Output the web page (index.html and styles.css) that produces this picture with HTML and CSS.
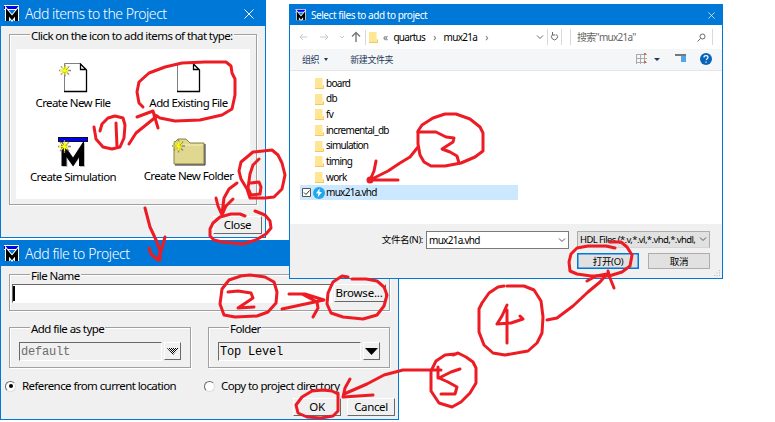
FILE: index.html
```html
<!DOCTYPE html>
<html lang="zh-CN">
<head>
<meta charset="utf-8">
<title>Add items to the Project</title>
<link rel="stylesheet" href="styles.css">
</head>
<body>
<svg class="defs" width="0" height="0">
  <symbol id="logo" viewBox="0 0 16 17">
    <path d="M0 0H15V5H0Z" fill="#fff"/><path d="M0 1H15V4H0Z" fill="#0000f0"/>
    <path d="M3.5 16V7.5L8 13L12.5 7.5V16" fill="none" stroke="#fff" stroke-width="5"/>
    <path d="M3.5 16V7.5L8 13L12.5 7.5V16" fill="none" stroke="#000" stroke-width="3"/>
  </symbol>
  <symbol id="star" viewBox="0 0 13 13">
    <path d="M6.5 0V13M0 6.5H13M2 2L11 11M11 2L2 11" stroke="#8c8c6a" stroke-width="1.4"/>
    <path d="M6.5 2V11M1 6.5H10M3 3L9 9M10 2L3 10" stroke="#ff0" stroke-width="1.1"/>
  </symbol>
  <symbol id="page" viewBox="0 0 24 30">
    <path d="M.5 28.5V.5H16L22.500 7V28.500Z" fill="#fff" stroke="#808080"/>
    <path d="M0 28.500H22.500V7L16.500 1V6.500H22.500" fill="none" stroke="#000" stroke-width="1.300"/>
  </symbol>
  <symbol id="folder" viewBox="0 0 9 11">
    <path d="M0 0H7.500V7.500H9V11H0Z" fill="#ffe694"/><path d="M0 10.500H8.500V7.500" fill="none" stroke="#eec95e"/>
  </symbol>
</svg>

<section class="window items">
  <header class="title"><svg class="logo"><use href="#logo"/></svg><span>Add items to the Project</span>
    <svg class="close" viewBox="0 0 10 10"><path d="M.5 .5L9.500 9.500M9.500 .5L.5 9.500"/></svg></header>
  <div class="group type-group">
    <span class="legend">Click on the icon to add items of that type:</span>
    <div class="choices">
      <div class="choice"><svg width="29" height="30"><use href="#page" x="5" width="24" height="30"/><use href="#star" x="0" y="1" width="12" height="13"/></svg><span>Create New File</span></div>
      <div class="choice"><svg width="24" height="30"><use href="#page" width="24" height="30"/></svg><span>Add Existing File</span></div>
      <div class="choice"><svg width="31" height="30"><path d="M0 0H30V5H0Z" fill="#111"/><path d="M1 1H29V4H1Z" fill="#00f"/><path d="M7 30V13L15.500 25L24.500 13V30" fill="none" stroke="#bbb" stroke-width="5"/><path d="M6 29V12L15 25L23.500 12V29" fill="none" stroke="#000" stroke-width="5"/><use href="#star" x="0" y="3" width="13" height="13"/></svg><span>Create Simulation</span></div>
      <div class="choice new-folder"><svg width="34" height="28"><path d="M2 26V5L6 1H14L18 5H32V26Z" fill="#e0d890" stroke="#8a8040"/><path d="M3 27H33V6" fill="none" stroke="#222"/><path d="M3 7H31" stroke="#f4efb8"/><use href="#star" x="0" y="1" width="13" height="14"/></svg><span>Create New Folder</span></div>
    </div>
  </div>
  <div class="actions"><button class="btn">Close</button></div>
</section>

<section class="window addfile">
  <header class="title"><svg class="logo"><use href="#logo"/></svg><span>Add file to Project</span></header>
  <div class="group name-group">
    <span class="legend">File Name</span>
    <div class="entry"><i class="caret"></i></div><button class="btn"><span class="loose">Browse...</span></button>
  </div>
  <div class="pair">
    <div class="group combo-group"><span class="legend">Add file as type</span>
      <div class="combo off">default</div><div class="drop"><svg width="12" height="7"><defs><pattern id="grain" width="2" height="2" patternUnits="userSpaceOnUse"><path d="M0 0H1V1H0ZM1 1H2V2H1Z"/></pattern></defs><path d="M0 0H12L6 7Z" fill="url(#grain)"/></svg></div></div>
    <div class="group combo-group"><span class="legend">Folder</span>
      <div class="combo">Top Level</div><div class="drop"><svg width="14" height="7"><path d="M0 0H13L6.500 7Z"/></svg></div></div>
  </div>
  <div class="radios">
    <div class="choice-radio"><i class="radio on"></i><span>Reference from current location</span></div>
    <div class="choice-radio"><i class="radio"></i><span>Copy to project directory</span></div>
  </div>
  <div class="actions"><button class="btn">OK</button><button class="btn">Cancel</button></div>
</section>

<section class="window picker">
  <header class="title"><svg class="logo"><use href="#logo"/></svg><span>Select files to add to project</span>
    <svg class="close" viewBox="0 0 10 10"><path d="M.5 .5L9.500 9.500M9.500 .5L.5 9.500"/></svg></header>
  <nav class="nav">
    <svg class="arrows" width="66" height="16" fill="none"><path d="M8 8H1M4 5L1 8L4 11M21 8H29M26 5L29 8L26 11M41 7L43 9L45 7" stroke="#c8c8c8"/><path d="M57 13V4M53 7.500L57 3.500L61 7.500" stroke="#777" stroke-width="1.400"/></svg>
    <i class="sep"></i><svg class="nav-folder" width="9" height="11"><use href="#folder"/></svg>
    <span class="chev">«</span><span class="crumb">quartus</span><span class="chev gt">›</span><span class="crumb">mux21a</span><span class="chev gt">›</span>
    <svg class="refresh" width="28" height="16" fill="none" stroke="#666"><path d="M2 6.500L5 9.500L8 6.500"/><path d="M12.500 0V16M26.500 0V16" stroke="#d9d9d9"/><path d="M21.500 5.500A3 3 0 1 1 17.500 5.500M17.500 3V6H20.500"/></svg>
    <div class="search"><span>搜索"mux21a"</span><svg width="9" height="9" fill="none" stroke="#666"><circle cx="5.500" cy="3.500" r="2.500"/><path d="M3.500 5.500L.5 8.500"/></svg></div>
  </nav>
  <div class="tools"><span>组织</span><i class="tri"></i><span class="create">新建文件夹</span>
    <svg class="view" width="76" height="13"><path d="M.5 1V11M4.500 1V11M8.500 1V11M0 1.500H11M0 5.500H11M0 9.500H11" stroke="#aaa"/><path d="M8 0H10V2H8ZM8 8H10V10H8Z" fill="#d65"/><path d="M18 5H24L21 8Z" fill="#1e395b"/><path d="M39 1H50V3H39Z" fill="#777"/><path d="M45 3H50V9H45Z" fill="#4aa8ee"/><circle cx="70" cy="6" r="6" fill="#0664bd"/><path d="M68 4.500Q68 2.700 70 2.700Q72 2.700 72 4.500Q72 5.500 70 6.700M70 8.500V9.700" fill="none" stroke="#fff" stroke-width="1.200"/></svg></div>
  <ul class="files">
    <li><svg><use href="#folder"/></svg>board</li><li><svg><use href="#folder"/></svg>db</li><li><svg><use href="#folder"/></svg>fv</li>
    <li><svg><use href="#folder"/></svg>incremental_db</li><li><svg><use href="#folder"/></svg>simulation</li><li><svg><use href="#folder"/></svg>timing</li><li><svg><use href="#folder"/></svg>work</li>
    <li class="selected"><svg class="check"><path d="M.5 .5H8.500V8.500H.5Z" fill="#fff" stroke="#555"/><path d="M2 4.500L4 6.500L7.500 2.500" fill="none" stroke="#333"/></svg><svg class="bolt" viewBox="0 0 12 12"><circle cx="6" cy="6" r="6" fill="#20a8ee"/><path d="M6.500 1.500L3 6.500H5.500L4.500 10.500L9 5H6.500Z" fill="#fff"/></svg>mux21a.vhd</li>
  </ul>
  <footer class="foot">
    <label>文件名(N):</label>
    <div class="field"><span>mux21a.vhd</span><svg width="8" height="5"><path d="M1 .5L4 3.500L7 .5"/></svg></div>
    <div class="field filter"><span>HDL Files (*.v,*.vl,*.vhd,*.vhdl,</span><svg width="8" height="5"><path d="M1 .5L4 3.500L7 .5"/></svg></div>
    <button class="w10 open">打开(O)</button><button class="w10">取消</button>
    <svg class="grip" width="7" height="7"><path d="M5 0h1v1h-1zM2.500 2.500h1v1h-1zM5 2.500h1v1h-1zM0 5h1v1h-1zM2.500 5h1v1h-1zM5 5h1v1h-1z"/></svg>
  </footer>
</section>

<svg class="ink" viewBox="0 0 775 422">
  <!-- step 1 -->
  <path d="M143 107L139 103L137 92L139 82L149 73L165 67L182 63L205 62H226L231 66L232 73L235 79V95L232 109L222 115L200 120L175 121L160 118L155 115"/>
  <path d="M94 127L96 139L103 147L112 149L120 147L124 138L125 125L123 118L115 116L108 118L102 124L100 131M116 123L117 147"/>
  <path d="M129 144L136 133L157 116M137 117L153 111L158 128M153 111L155 119"/>
  <path d="M145 208L150 227L157 242L160 251V260M149 248L151 254L158 260L162 248L165 237"/>
  <!-- step 6 -->
  <path d="M250 198L247 189L241 179L239 171L241 162L253 152L272 150L278 155L282 163L285 175L282 189L274 197L265 198H250"/>
  <path d="M259 159L253 165L250 174L248 188L251 195L260 194L261 187L259 182L251 183"/>
  <path d="M237 183L229 189L224 198L222 214M216 198L218 206L222 215L226 206L233 199"/>
  <path d="M245 216L240 214H231L220 217L213 223L210 229L210 236L214 240L222 242L243 244L256 240L266 234L271 228L270 221L265 215L255 211"/>
  <!-- step 2 -->
  <path d="M240 276L250 275L265 277L274 282L277 292L276 303L268 312L257 316L235 317L224 315L220 304L222 289L229 280L241 276"/>
  <path d="M228 292L238 291L251 293L253 298L238 308L254 307"/>
  <path d="M289 294H305L324 300L282 309M302 294L317 302L318 308L313 317"/>
  <path d="M348 277L342 276L333 282L328 293L327 304L331 313L343 317L363 319L377 315L384 306L387 295L384 287L377 281L366 279H352"/>
  <!-- step 3 -->
  <path d="M418 131L422 125L433 118L445 114H456L470 119L480 127L483 133V151L475 157L461 163L445 166H431L424 162L420 155L418 144Z"/>
  <path d="M418 132L436 132L446 137L454 138L453 142L442 149L450 152L457 156L459 163"/>
  <path d="M418 147L410 157L400 163L388 171L370 180M376 161L374 171L370 180H398"/><circle class="dot" cx="370" cy="180" r="3.500"/>
  <!-- step 4 -->
  <path d="M504 286L498 287L489 293L482 303L479 309V332L484 345L493 353L505 355L528 351L537 343L542 333L543 317L541 301L534 290L524 286H507"/>
  <path d="M507 305L502 316L497 324L511 323L523 319L520 316M507 310V343"/>
  <path d="M547 320L557 318L573 306L588 292L600 282L607 274M608 271L610 278L614 288M587 281L596 276L607 274"/>
  <path d="M615 248L606 246H588L577 248L571 254L569 262L570 271L577 274L591 276H609L622 272L630 266L632 255L627 247L621 242H610"/>
  <!-- step 5 -->
  <path d="M453 355L458 353L466 357L473 362L476 368V383L470 393L461 402L452 407L439 403L431 391V371L436 361L445 355L455 354"/>
  <path d="M460 369L451 372L439 378L448 382L457 387L455 394H441M438 367V378"/>
  <path d="M441 370H403L384 375L367 384L344 394M350 379L345 388L343 397L373 395"/>
  <path d="M338 394L332 391L323 390L312 391L302 397L296 405L298 413L307 417L321 418L333 416L338 411V393"/>
</svg>
</body>
</html>
```
FILE: styles.css
```css
* { box-sizing: border-box; }
body { margin: 0; width: 775px; height: 422px; overflow: hidden; position: relative; background: #fff; color: #000; font: 11.5px/14px "Noto Sans", "Noto Sans CJK SC", sans-serif; letter-spacing: -.58px; }
.defs, .ink { position: absolute; left: 0; top: 0; }
.ink { width: 775px; height: 422px; fill: none; stroke: #ed1c24; stroke-width: 3; stroke-linecap: round; stroke-linejoin: round; }
.ink .dot { fill: #ed1c24; stroke: none; }
.window { position: absolute; border: 1px solid #0078d7; background: #f0f0f0; }
span { white-space: nowrap; }
button { font: inherit; letter-spacing: inherit; color: inherit; padding: 0; margin: 0; }
.title { height: 25px; display: flex; align-items: center; background: #0078d7; color: #fff; padding-left: 3px; font-size: 14px; font-weight: 300; letter-spacing: -.46px; }
.title .logo { width: 16px; height: 17px; margin-right: 5px; flex: none; }
.close { width: 10px; height: 10px; margin-left: auto; fill: none; stroke: #fff; stroke-width: 1; }

.group { display: flex; border: 1px solid #a0a0a0; box-shadow: 1px 1px #fff, inset 1px 1px #fff; }
.legend { height: 14px; line-height: 14px; padding: 0 1px; background: #f0f0f0; margin-top: -6px; align-self: flex-start; }
.btn { height: 18px; border: 1px solid; border-color: #fff #696969 #696969 #fff; background: #f0f0f0; line-height: 14px; letter-spacing: -.35px; }
.loose { letter-spacing: -.2px; margin-left: -2px; }
.actions { display: flex; justify-content: flex-end; }

.items { left: 0; top: 0; width: 266px; height: 238px; }
.items .close { margin-right: 11px; }
.type-group { flex-direction: column; margin: 8px 8px 0; height: 171px; padding: 0 6px; }
.type-group .legend { margin-left: 14px; }
.choices { width: 234px; height: 150px; margin-top: 6px; background: #fff; display: grid; grid-template: 74px 76px / 114px 117px; padding-top: 14px; }
.choice { display: flex; flex-direction: column; align-items: center; }
.choice span { margin-top: 3px; }
.choice.new-folder { padding-top: 1px; }
.items .actions { margin: 11px 3px 0; }
.items .btn { width: 49px; }

.addfile { left: 0; top: 240px; width: 399px; height: 180px; }
.addfile .title { letter-spacing: -.38px; }
.name-group { margin: 8px 8px 0; height: 37px; padding: 9px 3px 0 2px; justify-content: space-between; }
.name-group .legend { position: absolute; margin: -15px 0 0 18px; }
.entry { width: 321px; height: 19px; border: 1px solid; border-color: #696969 #fff #fff #696969; background: #fff; padding: 1px 0; }
.caret { display: block; width: 2px; height: 15px; background: #000; }
.name-group .btn { width: 52px; }
.pair { display: flex; gap: 17px; margin: 16px 8px 0; }
.combo-group { width: 182px; height: 41px; padding: 14px 9px 0; gap: 2px; }
.combo-group .legend { position: absolute; margin: -20px 0 0 11px; }
.combo { width: 144px; height: 19px; border: 1px solid; border-color: #696969 #fff #fff #696969; font: 12px/19px "Liberation Mono", monospace; letter-spacing: -.2px; padding-left: 1px; }
.combo.off { color: #6d6d6d; }
.drop { width: 17px; height: 18px; border: 1px solid; border-color: #fff #696969 #696969 #fff; display: flex; align-items: center; justify-content: center; }
.drop svg { flex: none; }
.radios { display: grid; grid-template-columns: 199px 1fr; padding: 11px 0 0 4px; }
.choice-radio { display: flex; gap: 6px; align-items: center; }
.radio { width: 11px; height: 11px; border-radius: 50%; border: 1px solid; border-color: #696969 #ddd #ddd #696969; background: #fff; padding: 3px; }
.radio.on::after { content: ""; display: block; width: 4px; height: 4px; margin: -.5px; border-radius: 50%; background: #000; }
.addfile .actions { gap: 6px; margin: 5px 3px 0; }
.addfile .actions .btn { width: 48px; }

.picker { left: 289px; top: 4px; width: 434px; height: 275px; font-size: 10px; letter-spacing: -.72px; }
.picker .title { height: 20px; font-size: 10px; font-weight: 400; letter-spacing: -.45px; padding-left: 5px; }
.picker .logo { width: 12px; height: 12px; margin-right: 4px; }
.picker .close { width: 7px; height: 7px; margin-right: 7px; }
.nav { height: 24px; display: flex; align-items: center; background: #fff; padding-left: 9px; }
.sep { width: 1px; height: 15px; background: #d9d9d9; margin-right: 3px; }
.crumb { letter-spacing: -.7px; }
.chev { color: #666; margin: 0 6px 1px 5px; }
.chev.gt { margin: 0 8px 1px; }
.refresh { margin-left: auto; margin-right: 7px; }
.search { width: 143px; height: 16px; border: solid #d9d9d9; border-width: 0 1px; margin-right: 9px; display: flex; align-items: center; justify-content: space-between; padding: 0 6px; color: #666; }
.tools { height: 22px; background: #f5f6f7; border-bottom: 1px solid #e5e5e5; display: flex; align-items: center; color: #1e395b; padding-left: 12px; font-size: 9px; letter-spacing: -.4px; }
.tri { border: 2.5px solid transparent; border-top: 3px solid #1e395b; border-bottom: 0; margin-left: 5px; }
.create { margin-left: 22px; }
.view { margin: 0 10px 0 auto; }
.files { list-style: none; margin: 0; padding: 4.5px 0 0 10px; height: 153px; background: #fff; line-height: 15.7px; }
.files li { height: 15.7px; display: flex; align-items: center; padding-left: 15px; }
.files svg { width: 9px; height: 11px; margin-right: 2px; }
.files .selected { width: 218px; height: 15px; background: #cce8ff; padding-left: 2px; }
.files .check { width: 9px; height: 9px; margin-right: 2px; }
.files .bolt { width: 12px; height: 12px; margin-right: 1px; }
.foot { display: grid; grid-template: 18px 17px / 128px 143px 133px; column-gap: 8px; row-gap: 4px; padding: 7px 0 0; height: 54px; }
.foot label { text-align: right; font-size: 9.5px; line-height: 18px; letter-spacing: -.4px; margin-right: -5px; white-space: nowrap; }
.field { border: 1px solid #7a7a7a; background: #fff; display: flex; align-items: center; justify-content: space-between; padding: 0 2px; min-width: 0; }
.field svg { flex: none; fill: none; stroke: #555; }
.filter { border-color: #adadad; border-bottom-color: #d5d5d5; background: #e1e1e1; height: 17px; font-size: 9.5px; letter-spacing: -.6px; }
.w10 { height: 16px; width: 62px; border: 1px solid #adadad; background: #e1e1e1; font-size: 9.5px; line-height: 13px; grid-row: 2; grid-column: 3; justify-self: end; letter-spacing: -.3px; }
.w10.open { justify-self: start; border-color: #0078d7; box-shadow: inset 0 0 0 .5px #0078d7; }
.grip { position: absolute; right: 1px; bottom: 1px; fill: #bbb; }
```
